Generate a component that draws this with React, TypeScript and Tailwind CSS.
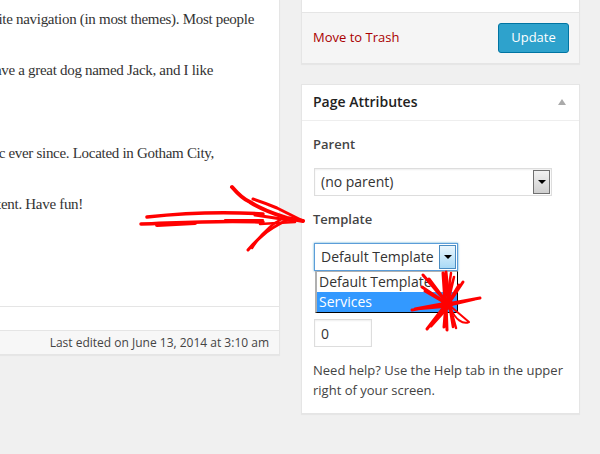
const sans = "font-['Open_Sans',sans-serif]";

function ArrowButton({ focused }: { focused?: boolean }) {
  return (
    <div
      className={
        "flex w-[17px] shrink-0 items-center justify-center border " +
        (focused
          ? "border-[#4a8cc2] bg-gradient-to-b from-[#eaf6fd] to-[#a9daf6]"
          : "border-[#707070] bg-gradient-to-b from-[#f2f2f2] to-[#cfcfcf]")
      }
    >
      <div className="h-0 w-0 border-x-[4px] border-t-[4px] border-x-transparent border-t-black" />
    </div>
  );
}

function ArrowScribble() {
  return (
    <svg className="absolute left-[135px] top-[180px]" width="175" height="76" viewBox="0 0 175 76" fill="none" stroke="#ff0000" strokeLinecap="round" strokeLinejoin="round">
      <path d="M12 37 C40 34 80 31 128 34" strokeWidth="3.5" />
      <path d="M6 44 C40 43 80 40 128 42" strokeWidth="3.5" />
      <path d="M22 45 L60 43" strokeWidth="4" />
      <path d="M90 40 L128 40" strokeWidth="2" />
      <path d="M120 35 L160 41" strokeWidth="3" />
      <path d="M97 7 C103 14 108 19 115 22 C127 30 140 34 152 38 L168 41" strokeWidth="4" />
      <path d="M118 19 C127 22 135 25 142 28 C150 32 160 37 168 41" strokeWidth="3" />
      <path d="M113 70 C118 64 122 60 128 55 C136 48 144 44 152 40" strokeWidth="3" />
      <path d="M117 68 C122 60 128 53 135 47 C138 44 141 42 145 40" strokeWidth="2.5" />
      <path d="M125 44 L160 42" strokeWidth="2.5" />
    </svg>
  );
}

function StarScribble() {
  return (
    <svg className="absolute left-[405px] top-[265px]" width="80" height="70" viewBox="0 0 80 70" fill="none" stroke="#ff0000" strokeLinecap="round" strokeLinejoin="round">
      <path d="M18 10 L42 38 L24 14 L44 42" strokeWidth="3" />
      <path d="M41 7 L44 38 L38 8 L40 38" strokeWidth="3" />
      <path d="M46 8 L42 36 L49 12 L43 38" strokeWidth="2.5" />
      <path d="M58 17 L44 38 L54 20 L42 40" strokeWidth="3" />
      <path d="M75 33 L42 39 L70 34 L40 41" strokeWidth="3" />
      <path d="M7 45 L42 38 L10 44 L44 41" strokeWidth="3" />
      <path d="M17 22 L44 40 L20 26" strokeWidth="3" />
      <path d="M22 64 L42 38 L26 61 L44 41" strokeWidth="3" />
      <path d="M42 65 L41 38 L39 62" strokeWidth="3" />
      <path d="M51 63 L44 38 L48 62" strokeWidth="2.5" />
      <path d="M44 40 L64 57 C58 60 50 54 46 44" strokeWidth="2" />
      <circle cx="42" cy="39" r="6" fill="#ff0000" stroke="none" />
    </svg>
  );
}

export default function App() {
  return (
    <div className={"relative flex h-[454px] w-[600px] overflow-hidden bg-[#f0f0f0] text-[13px] text-[#444] " + sans}>
      {/* editor */}
      <div className="h-[355px] w-[280px] shrink-0 border-r border-b border-[#e5e5e5] bg-white shadow-[0_1px_1px_rgba(0,0,0,0.04)]">
        <div className="h-[307px] border-b border-[#e5e5e5] font-['Liberation_Serif',serif] text-[15px] leading-[20px] tracking-[-0.3px] text-[#333]">
          <div className="flex h-[60px] justify-end overflow-hidden whitespace-nowrap pr-[25px] pt-[9px]">site navigation (in most themes). Most people</div>
          <div className="flex h-[83px] justify-end overflow-hidden whitespace-nowrap pr-[66px]">have a great dog named Jack, and I like</div>
          <div className="flex h-[51px] justify-end overflow-hidden whitespace-nowrap pr-[65px]">public ever since. Located in Gotham City,</div>
          <div className="flex justify-end overflow-hidden whitespace-nowrap pr-[196px]">content. Have fun!</div>
        </div>
        <div className="h-[23px]" />
        <div className="flex h-[24px] items-center justify-end border-t border-[#e5e5e5] bg-[#f7f7f7] pr-[10px] text-[12px] text-[#444]">
          Last edited on June 13, 2014 at 3:10 am
        </div>
      </div>

      {/* sidebar */}
      <div className="ml-[21px] w-[279px] shrink-0">
        <div className="flex h-[64px] flex-col border-r border-b border-l border-[#e5e5e5] bg-white shadow-[0_1px_1px_rgba(0,0,0,0.04)]">
          <div className="h-[12px]" />
          <div className="flex flex-1 items-center justify-between border-t border-[#e5e5e5] bg-[#f5f5f5] pl-[11px] pr-[10px]">
            <span className="text-[#a00]">Move to Trash</span>
            <button type="button" className="h-[30px] w-[71px] rounded-[3px] border border-[#0074a2] bg-[#2ea2cc] text-[13px] text-white">
              Update
            </button>
          </div>
        </div>

        <div className="mt-[20px] h-[330px] border border-[#e5e5e5] bg-white shadow-[0_1px_1px_rgba(0,0,0,0.04)]">
          <div className="flex h-[36px] items-center justify-between border-b border-[#eeeeee] pb-[2px] pl-[11px] pr-[13px]">
            <span className="text-[14px] font-semibold text-[#222]">Page Attributes</span>
            <div className="h-0 w-0 border-x-[4px] border-b-[6px] border-x-transparent border-b-[#aaa]" />
          </div>

          <div className="pl-[11px]">
            <div className="mt-[14px] h-[18px] font-semibold leading-[18px]">Parent</div>
            <div className="mt-[15px] ml-px flex h-[28px] w-[238px] border border-[#ddd] py-px pr-px pl-[6px] text-[14px] text-[#333] shadow-[inset_0_1px_2px_rgba(0,0,0,0.07)]">
              <span className="flex flex-1 items-center pb-[2px]">(no parent)</span>
              <ArrowButton />
            </div>

            <div className="mt-[14px] h-[18px] font-semibold leading-[18px]">Template</div>
            <div className="mt-[15px] ml-px flex h-[28px] w-[144px] border border-[#5b9dd9] py-px pr-px pl-[6px] text-[14px] text-[#333] shadow-[0_0_2px_rgba(30,140,190,0.8)]">
              <span className="flex flex-1 items-center whitespace-nowrap pb-[2px]">Default Template</span>
              <ArrowButton focused />
            </div>

            {/* the open dropdown sits over the order label */}
            <div className="relative h-[48px]">
              <div className="absolute left-[2px] top-0 h-[42px] w-[143px] border-t border-r border-b border-l-2 border-t-[#b0b0b0] border-r-black border-b-black border-l-[#b0b0b0] bg-white text-[14px] leading-[20px] text-[#333]">
                <div className="h-[20px] pl-[2px] whitespace-nowrap">Default Template</div>
                <div className="h-[20px] bg-[#3399ff] pl-[2px] text-white">Services</div>
              </div>
            </div>

            <div className="ml-px flex h-[28px] w-[58px] items-center border border-[#ddd] pl-[6px] text-[14px] text-[#333] shadow-[inset_0_1px_2px_rgba(0,0,0,0.07)]">0</div>

            <p className="mt-[13px] w-[256px] leading-[20px]">Need help? Use the Help tab in the upper right of your screen.</p>
          </div>
        </div>
      </div>

      <ArrowScribble />
      <StarScribble />
    </div>
  );
}
